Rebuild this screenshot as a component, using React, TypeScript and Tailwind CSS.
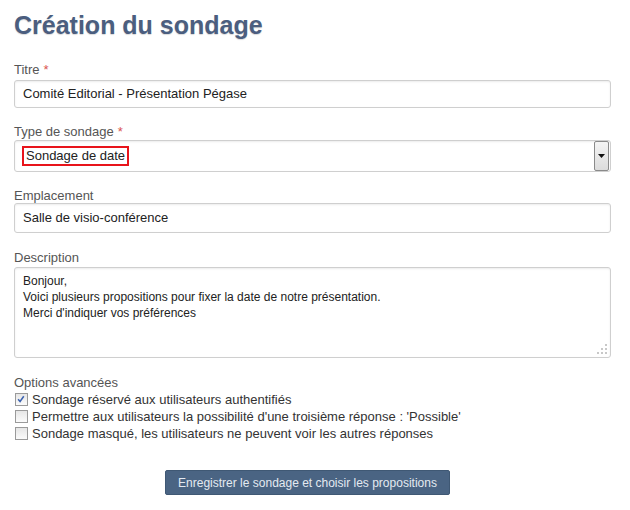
const fieldBox =
    'rounded-[3px] border border-[#cfcfcf] bg-white shadow-[inset_0_1px_2px_rgba(0,0,0,0.08)]';

function Label({ text, required }: { text: string; required?: boolean }) {
    return (
        <div className="h-[16px] text-[13px] leading-[16px] text-[#555]">
            {text}
            {required && <span className="ml-1 text-[#d9534f]">*</span>}
        </div>
    );
}

function Checkbox({ checked }: { checked?: boolean }) {
    return (
        <span className="relative inline-block h-[13px] w-[13px] shrink-0 border border-[#9a9a9a] bg-[linear-gradient(180deg,#e6e6e6_0%,#fbfbfb_100%)]">
            {checked && (
                <svg viewBox="0 0 13 13" className="absolute left-0 top-0 h-[11px] w-[11px]">
                    <path d="M2.5 6.2 L4.8 8.8 L9.2 2.6" fill="none" stroke="#3b62b0" strokeWidth="1.8" />
                </svg>
            )}
        </span>
    );
}

export default function App() {
    const options = [
        { label: 'Sondage réservé aux utilisateurs authentifiés', checked: true },
        { label: "Permettre aux utilisateurs la possibilité d'une troisième réponse : 'Possible'", checked: false },
        { label: 'Sondage masqué, les utilisateurs ne peuvent voir les autres réponses', checked: false },
    ];

    return (
        <div className="h-[510px] w-[630px] bg-white pl-[14px] pr-[19px] font-['Liberation_Sans',Arial,sans-serif] text-[#222]">
            <h1 className="pt-[9px] text-[25px] leading-[32px] font-bold text-[#4b5e7f] [text-shadow:0_1px_1px_rgba(0,0,0,0.15)]">
                Création du sondage
            </h1>

            <div className="mt-[21px]">
                <Label text="Titre" required />
                <div className={`mt-[2px] flex h-[28px] items-center px-[8px] text-[13px] ${fieldBox}`}>
                    Comité Editorial - Présentation Pégase
                </div>
            </div>

            <div className="mt-[16px]">
                <Label text="Type de sondage" required />
                <div className={`flex h-[32px] items-center justify-between pl-[7px] pr-px text-[13px] ${fieldBox}`}>
                    <span className="border-2 border-[#e8141b] px-[2px] py-[1px] leading-[14px]">Sondage de date</span>
                    <span className="flex h-[30px] w-[15px] items-center justify-center rounded-[2px] border border-[#8a8a8a] bg-[linear-gradient(180deg,#f4f4f4_0%,#dcdcdc_100%)]">
                        <svg viewBox="0 0 7 4" className="h-[4px] w-[7px]">
                            <path d="M0 0 L7 0 L3.5 4 Z" fill="#111" />
                        </svg>
                    </span>
                </div>
            </div>

            <div className="mt-[16px]">
                <Label text="Emplacement" />
                <div className={`-mt-px flex h-[30px] items-center px-[8px] text-[13px] ${fieldBox}`}>
                    Salle de visio-conférence
                </div>
            </div>

            <div className="mt-[17px]">
                <Label text="Description" />
                <div className={`relative mt-[1px] h-[91px] px-[8px] pt-[5px] text-[12px] leading-[16px] ${fieldBox}`}>
                    <div>Bonjour,</div>
                    <div>Voici plusieurs propositions pour fixer la date de notre présentation.</div>
                    <div>Merci d'indiquer vos préférences</div>
                    <svg viewBox="0 0 12 12" className="absolute bottom-[2px] right-[2px] h-[12px] w-[12px]">
                        <rect x="9" y="1" width="2" height="2" fill="#c8c8c8" />
                        <rect x="5" y="5" width="2" height="2" fill="#c8c8c8" />
                        <rect x="9" y="5" width="2" height="2" fill="#c8c8c8" />
                        <rect x="1" y="9" width="2" height="2" fill="#c8c8c8" />
                        <rect x="5" y="9" width="2" height="2" fill="#c8c8c8" />
                        <rect x="9" y="9" width="2" height="2" fill="#c8c8c8" />
                    </svg>
                </div>
            </div>

            <div className="mt-[16px] text-[13px] leading-[17px]">
                <div className="h-[17px] text-[#555]">Options avancées</div>
                {options.map((option) => (
                    <div key={option.label} className="flex h-[17px] items-center gap-[4px] pl-px text-[#333]">
                        <Checkbox checked={option.checked} />
                        <span>{option.label}</span>
                    </div>
                ))}
            </div>

            <div className="mt-[28px] flex justify-center pr-[10px]">
                <button
                    type="button"
                    className="h-[25px] rounded-[2px] border border-[#3f5874] bg-[#4a6483] px-[12px] text-[12px] text-[#e4eaf1]"
                >
                    Enregistrer le sondage et choisir les propositions
                </button>
            </div>
        </div>
    );
}
